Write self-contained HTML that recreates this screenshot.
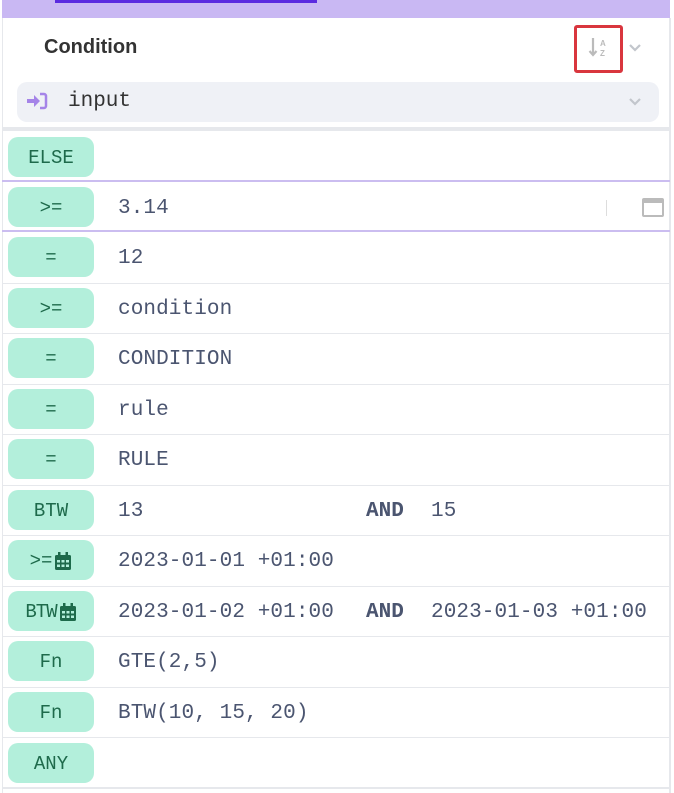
<!DOCTYPE html>
<html><head><style>
*{box-sizing:border-box;margin:0;padding:0}
body{width:674px;height:793px;background:#fff;position:relative;overflow:hidden;font-family:"Liberation Sans",sans-serif}
.abs{position:absolute}
.mono{font-family:"Liberation Mono",monospace}
.row{position:absolute;left:2px;width:668px;border-bottom:1px solid #e6e8ec}
.pill{position:absolute;left:6px;width:86px;height:40px;background:#b3efdb;border-radius:10px;color:#1e6a4b;font-family:"Liberation Mono",monospace;font-size:19px;display:flex;align-items:center;justify-content:center;gap:2px;padding-top:2px}
.val{position:absolute;left:116px;color:#4b5570;font-family:"Liberation Mono",monospace;font-size:21px;letter-spacing:0.1px}
.and{position:absolute;left:364px;color:#4b5570;font-family:"Liberation Mono",monospace;font-size:21px;font-weight:bold}
.v2{left:429px}
</style></head><body>
<div class="abs" style="left:2px;top:0;width:668px;height:18px;background:#c9b8f3"></div>
<div class="abs" style="left:55px;top:0;width:262px;height:3px;background:#5b2be0"></div>
<div class="abs" style="left:2px;top:18px;width:1px;height:775px;background:#e6e8ec"></div>
<div class="abs" style="left:669px;top:18px;width:2px;height:775px;background:#e6e8ec"></div>
<div class="abs" style="left:44px;top:36px;font-size:20px;font-weight:bold;color:#333">Condition</div>
<div class="abs" style="left:574px;top:25px;width:49px;height:48px;border:3px solid #d9363e;border-radius:3px"></div>
<svg class="abs" style="left:588px;top:36px" width="24" height="24" viewBox="0 0 24 24"><path d="M5 2v16M1.5 15l3.5 4 3.5-4" stroke="#bbb" stroke-width="2.2" fill="none"/><text x="12" y="10" font-size="8" font-family="Liberation Sans" fill="#bbb" font-weight="bold">A</text><text x="12" y="20" font-size="8" font-family="Liberation Sans" fill="#bbb" font-weight="bold">Z</text></svg>
<svg class="abs" style="left:628px;top:43px" width="14" height="10" viewBox="0 0 14 10"><path d="M2 2l5 5 5-5" stroke="#c2c6cc" stroke-width="2.2" fill="none"/></svg>
<div class="abs" style="left:17px;top:82px;width:642px;height:40px;background:#eff1f6;border-radius:10px"></div>
<svg class="abs" style="left:26px;top:92px" width="22" height="18" viewBox="0 0 22 18"><path d="M1 7h7V3l6 6-6 6v-4H1z" fill="#a584e8"/><path d="M14 2h4a2 2 0 012 2v10a2 2 0 01-2 2h-4" stroke="#a584e8" stroke-width="2.5" fill="none"/></svg>
<div class="abs mono" style="left:68px;top:90px;font-size:21px;color:#333">input</div>
<svg class="abs" style="left:628px;top:97px" width="14" height="10" viewBox="0 0 14 10"><path d="M2 2l5 5 5-5" stroke="#c2c6cc" stroke-width="2.2" fill="none"/></svg>
<div class="abs" style="left:2px;top:127px;width:668px;height:4px;background:#e6e8ec"></div>

<div class="row" style="top:131px;height:51px;border-bottom:2px solid #cbbdf0"><div class="pill" style="top:6px">ELSE</div></div>
<div class="row" style="top:183px;height:49px;border-bottom:2px solid #cbbdf0"><div class="pill" style="top:4px">&gt;=</div><div class="val" style="top:14px">3.14</div>
<div class="abs" style="left:604px;top:17px;width:1px;height:16px;background:#ddd"></div>
<div class="abs" style="left:640px;top:15px;width:22px;height:19px;border:2px solid #bbb;border-top-width:5px;border-radius:2px"></div></div>
<div class="row" style="top:233px;height:51px"><div class="pill" style="top:4px">=</div><div class="val" style="top:14px">12</div></div>
<div class="row" style="top:284px;height:50px"><div class="pill" style="top:4px">&gt;=</div><div class="val" style="top:14px">condition</div></div>
<div class="row" style="top:334px;height:51px"><div class="pill" style="top:4px">=</div><div class="val" style="top:14px">CONDITION</div></div>
<div class="row" style="top:385px;height:50px"><div class="pill" style="top:4px">=</div><div class="val" style="top:14px">rule</div></div>
<div class="row" style="top:435px;height:51px"><div class="pill" style="top:4px">=</div><div class="val" style="top:14px">RULE</div></div>
<div class="row" style="top:486px;height:50px"><div class="pill" style="top:4px">BTW</div><div class="val" style="top:14px">13</div><div class="and" style="top:14px">AND</div><div class="val v2" style="top:14px">15</div></div>
<div class="row" style="top:536px;height:51px"><div class="pill" style="top:4px">&gt;=<svg width="18" height="20" viewBox="0 0 18 20"><rect x="1" y="4" width="16" height="15" rx="1.5" fill="#1e6a4b"/><rect x="4" y="1" width="2.5" height="4" fill="#1e6a4b"/><rect x="11.5" y="1" width="2.5" height="4" fill="#1e6a4b"/><g fill="#b3efdb"><rect x="3" y="9" width="3" height="2.5"/><rect x="7.5" y="9" width="3" height="2.5"/><rect x="12" y="9" width="3" height="2.5"/><rect x="3" y="13.5" width="3" height="2.5"/><rect x="7.5" y="13.5" width="3" height="2.5"/><rect x="12" y="13.5" width="3" height="2.5"/></g></svg></div><div class="val" style="top:14px">2023-01-01 +01:00</div></div>
<div class="row" style="top:587px;height:50px"><div class="pill" style="top:4px;letter-spacing:-1px">BTW<svg width="18" height="20" viewBox="0 0 18 20"><rect x="1" y="4" width="16" height="15" rx="1.5" fill="#1e6a4b"/><rect x="4" y="1" width="2.5" height="4" fill="#1e6a4b"/><rect x="11.5" y="1" width="2.5" height="4" fill="#1e6a4b"/><g fill="#b3efdb"><rect x="3" y="9" width="3" height="2.5"/><rect x="7.5" y="9" width="3" height="2.5"/><rect x="12" y="9" width="3" height="2.5"/><rect x="3" y="13.5" width="3" height="2.5"/><rect x="7.5" y="13.5" width="3" height="2.5"/><rect x="12" y="13.5" width="3" height="2.5"/></g></svg></div><div class="val" style="top:14px">2023-01-02 +01:00</div><div class="and" style="top:14px">AND</div><div class="val v2" style="top:14px">2023-01-03 +01:00</div></div>
<div class="row" style="top:637px;height:51px"><div class="pill" style="top:4px">Fn</div><div class="val" style="top:14px">GTE(2,5)</div></div>
<div class="row" style="top:688px;height:50px"><div class="pill" style="top:4px">Fn</div><div class="val" style="top:14px">BTW(10, 15, 20)</div></div>
<div class="row" style="top:738px;height:51px;border-bottom:2px solid #e6e8ec"><div class="pill" style="top:5px">ANY</div></div>
</body></html>
